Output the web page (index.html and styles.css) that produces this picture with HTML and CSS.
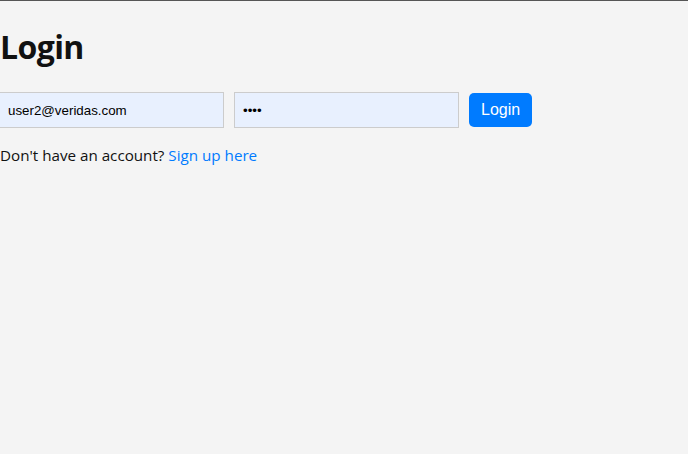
FILE: index.html
```html
<!DOCTYPE html>
<html>
<head>
<meta charset="utf-8">
<link rel="stylesheet" href="styles.css">
</head>
<body>
<div class="page">
  <h1 class="title">Login</h1>
  <form class="login-form">
    <input class="field" type="email" value="user2@veridas.com">
    <input class="field" type="password" value="1234">
    <button class="btn" type="button">Login</button>
  </form>
  <p class="signup">Don't have an account? <a class="link" href="#">Sign up here</a></p>
</div>
</body>
</html>
```
FILE: styles.css
```css
html, body {
  margin: 0;
  padding: 0;
  background: #f4f4f4;
}
body {
  border-top: 1px solid #555;
  font-family: "Open Sans", "Noto Sans", sans-serif;
  color: #111;
  height: 453px;
}
.page {
  padding: 0;
}
.title {
  font-family: "Open Sans", sans-serif;
  font-size: 32px;
  font-weight: 700;
  margin: 22px 0 0 0;
  line-height: 48px;
  letter-spacing: -0.6px;
}
.login-form {
  display: flex;
  align-items: center;
  gap: 10px;
  margin: 21px 0 0 -1px;
}
.field {
  box-sizing: border-box;
  width: 225px;
  height: 36px;
  padding: 0 8px;
  border: 1px solid #ccc;
  background: #e8f0fe;
  font-family: "Liberation Sans", Arial, sans-serif;
  font-size: 13.33px;
  color: #000;
  margin: 0;
  outline: none;
}
.btn {
  box-sizing: border-box;
  height: 34px;
  padding: 0 12px;
  border: none;
  border-radius: 5px;
  background: #007bff;
  color: #fff;
  font-family: "Liberation Sans", Arial, sans-serif;
  font-size: 16px;
  margin: 0;
}
.signup {
  margin: 16px 0 0 0;
  font-size: 15.2px;
  line-height: 22px;
}
.link {
  color: #007bff;
  text-decoration: none;
}
```
